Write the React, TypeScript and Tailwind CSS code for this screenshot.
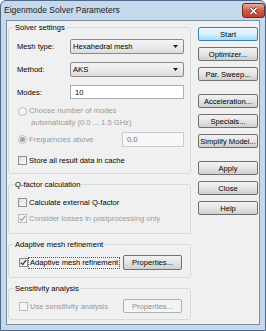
import React from 'react';

const face = "font-['Liberation_Sans',Arial,sans-serif]";

function Btn({ label, primary, disabled, className = '' }: { label: string; primary?: boolean; disabled?: boolean; className?: string }) {
  const look = primary
    ? 'border-[#3c7fb1] bg-gradient-to-b from-[#eaf6fd] via-[#d9f0fc] to-[#a7d9f5] text-black'
    : disabled
      ? 'border-[#adb2b5] bg-[#f4f4f4] text-[#8d8d8d]'
      : 'border-[#707070] bg-gradient-to-b from-[#f2f2f2] via-[#e4e4e4] to-[#cfcfcf] text-black';
  return (
    <div className={`h-[14px] flex items-center justify-center border rounded-[2px] whitespace-nowrap ${look} ${className}`}>
      {label}
    </div>
  );
}

function Combo({ value }: { value: string }) {
  return (
    <div className="flex-1 h-[15px] flex items-center justify-between pl-[2px] pr-[5px] border border-[#8a8a8a] rounded-[2px] bg-gradient-to-b from-[#f4f4f4] via-[#ebebeb] to-[#dcdcdc]">
      <span>{value}</span>
      <svg width="5" height="3" viewBox="0 0 5 3">
        <path d="M0 0 H5 L2.5 3 Z" fill="#1a1a1a" />
      </svg>
    </div>
  );
}

function Check({ checked, disabled }: { checked?: boolean; disabled?: boolean }) {
  return (
    <div className={`w-[9px] h-[9px] shrink-0 flex items-center justify-center border ${disabled ? 'border-[#bcbcbc] bg-[#f4f4f4]' : 'border-[#8e8f8f] bg-gradient-to-br from-[#dcdcdc] to-[#fbfbfb]'}`}>
      {checked && (
        <svg width="7" height="7" viewBox="0 0 7 7">
          <path d="M0.8 3.6 L2.7 5.5 L6.2 1.2" fill="none" stroke={disabled ? '#a0a0a0' : '#2b3f66'} strokeWidth="1.3" />
        </svg>
      )}
    </div>
  );
}

function Radio({ checked }: { checked?: boolean }) {
  return (
    <div className="w-[9px] h-[9px] shrink-0 rounded-full border border-[#bcbcbc] bg-[#f4f4f4] flex items-center justify-center">
      {checked && <div className="w-[5px] h-[5px] rounded-full bg-[#a3a3a3]" />}
    </div>
  );
}

function Group({ title, className, children }: { title: string; className: string; children: React.ReactNode }) {
  return (
    <fieldset className={`border border-[#d5dadd] rounded-[3px] min-w-0 ${className}`}>
      <legend className="ml-[5px] px-[1px] leading-[11px]">{title}</legend>
      {children}
    </fieldset>
  );
}

export default function App() {
  return (
    <div className={`w-[266px] h-[331px] flex flex-col bg-[#c6d8ec] border border-[#50698a] rounded-t-[6px] overflow-hidden text-[7.6px] leading-[11px] text-black ${face}`}>
      <div className="h-[19px] flex items-start justify-between pl-[3px]">
        <span className="text-[8.5px] leading-[19px] text-[#1c1c1c]">Eigenmode Solver Parameters</span>
        <div className="mt-[2px] w-[23px] h-[15px] rounded-[3px] border border-[#6b2a22] bg-gradient-to-b from-[#e9a99b] via-[#cf5a48] to-[#c2412c] flex items-center justify-center">
          <svg width="9" height="8" viewBox="0 0 9 8">
            <path d="M1.5 1 L7.5 7 M7.5 1 L1.5 7" stroke="#5a1f18" strokeWidth="2.6" />
            <path d="M1.5 1 L7.5 7 M7.5 1 L1.5 7" stroke="#ffffff" strokeWidth="1.6" />
          </svg>
        </div>
      </div>

      <div className="mx-[5px] mb-[5px] flex-1 flex border border-[#7d8fa6] bg-[#f0f0f0]">
        <div className="w-[184px] pl-[1px] pt-[1px] flex flex-col gap-[5px]">
          <Group title="Solver settings" className="h-[152px]">
            <div className="pl-[8px] pr-[6px] flex flex-col">
              <div className="mt-[6px] h-[15px] flex items-center">
                <span className="w-[53px]">Mesh type:</span>
                <Combo value="Hexahedral mesh" />
              </div>
              <div className="mt-[8px] h-[15px] flex items-center">
                <span className="w-[53px]">Method:</span>
                <Combo value="AKS" />
              </div>
              <div className="mt-[8px] h-[14px] flex items-center">
                <span className="w-[53px]">Modes:</span>
                <div className="flex-1 h-[14px] flex items-center pl-[4px] border border-[#abadb3] bg-white">10</div>
              </div>
              <div className="mt-[6px] leading-[12px] text-[#9a9a9a]">
                <div className="flex items-center gap-[2px] pl-[1px]">
                  <Radio />
                  <span>Choose number of modes</span>
                </div>
                <div className="pl-[14px]">automatically (0.0 ... 1.5 GHz)</div>
              </div>
              <div className="mt-[3px] h-[15px] flex items-center text-[#9a9a9a]">
                <div className="flex items-center gap-[2px] pl-[1px]">
                  <Radio checked />
                  <span>Frequencies above</span>
                </div>
                <div className="ml-auto w-[62px] h-[15px] flex items-center pl-[4px] border border-[#c9cdd2] bg-[#f7f7f7] text-[#6d6d6d]">0.0</div>
              </div>
              <div className="mt-[7px] h-[12px] flex items-center gap-[2px] pl-[1px]">
                <Check />
                <span>Store all result data in cache</span>
              </div>
            </div>
          </Group>

          <Group title="Q-factor calculation" className="h-[55px]">
            <div className="pl-[9px] flex flex-col">
              <div className="mt-[6px] h-[12px] flex items-center gap-[2px]">
                <Check />
                <span>Calculate external Q-factor</span>
              </div>
              <div className="mt-[4px] h-[12px] flex items-center gap-[2px] text-[#9a9a9a]">
                <Check checked disabled />
                <span>Consider losses in postprocessing only</span>
              </div>
            </div>
          </Group>

          <Group title="Adaptive mesh refinement" className="h-[39px]">
            <div className="pl-[10px] pr-[8px] mt-[5px] h-[15px] flex items-center">
              <Check checked />
              <span className="ml-[0px] px-[1px] border border-dotted border-[#555] leading-[10px]">Adaptive mesh refinement</span>
              <Btn label="Properties..." className="ml-auto w-[59px] h-[15px]" />
            </div>
          </Group>

          <Group title="Sensitivity analysis" className="h-[37px]">
            <div className="pl-[10px] pr-[8px] mt-[5px] h-[14px] flex items-center text-[#9a9a9a]">
              <Check disabled />
              <span className="ml-[2px]">Use sensitivity analysis</span>
              <Btn label="Properties..." disabled className="ml-auto w-[59px]" />
            </div>
          </Group>
        </div>

        <div className="ml-[7px] w-[60px] pt-[6px] flex flex-col">
          <Btn label="Start" primary />
          <Btn label="Optimizer..." className="mt-[6px]" />
          <Btn label="Par. Sweep..." className="mt-[6px]" />
          <Btn label="Acceleration..." className="mt-[13px]" />
          <Btn label="Specials..." className="mt-[6px]" />
          <Btn label="Simplify Model..." className="mt-[6px]" />
          <Btn label="Apply" className="mt-[13px]" />
          <Btn label="Close" className="mt-[6px]" />
          <Btn label="Help" className="mt-[6px]" />
        </div>
      </div>
    </div>
  );
}
